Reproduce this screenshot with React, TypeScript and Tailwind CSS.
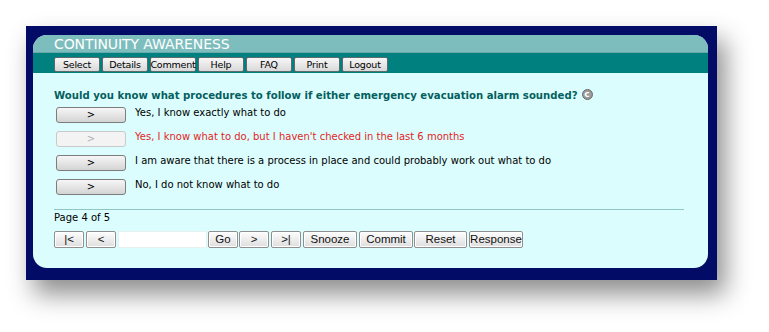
import React from "react";

const navItems = ["Select", "Details", "Comment", "Help", "FAQ", "Print", "Logout"];

const answers = [
  { text: "Yes, I know exactly what to do", active: true },
  { text: "Yes, I know what to do, but I haven't checked in the last 6 months", active: false },
  { text: "I am aware that there is a process in place and could probably work out what to do", active: true },
  { text: "No, I do not know what to do", active: true },
];

const lucida = "font-['DejaVu_Sans',Verdana,sans-serif]";

function NavButton({ label }: { label: string }) {
  return (
    <button className="w-[46px] h-[15px] flex items-center justify-center rounded-[2px] border border-[#5c6b6b] bg-gradient-to-b from-[#f7f7f7] to-[#d9d9d9] text-[9.5px] tracking-[-0.2px] text-black leading-none">
      {label}
    </button>
  );
}

function PagerButton({ label, w, ml }: { label: string; w: string; ml: string }) {
  return (
    <button
      className={`${w} ${ml} h-[17px] flex items-center justify-center rounded-[2px] border border-[#8f8f8f] bg-gradient-to-b from-[#fdfdfd] to-[#dedede] font-['Liberation_Sans',Arial,sans-serif] text-[11.5px] text-[#111] leading-none shadow-[inset_0_0_0_1px_#ffffff]`}
    >
      {label}
    </button>
  );
}

export default function App() {
  return (
    <div className="w-[769px] h-[332px] bg-white pl-[26px] pt-[26px]">
      <div className="w-[691px] h-[254px] bg-[#020b66] pl-[7px] pt-[9px] shadow-[8px_14px_24px_rgba(0,0,0,0.45)]">
        <div className={`w-[675px] h-[233px] rounded-[14px] overflow-hidden bg-[#dcfdfd] flex flex-col ${lucida}`}>
          <div className="h-[18px] bg-[#7dbdbd] border-b border-[#6aa9a9] pl-[21px] flex items-center">
            <span className="text-white text-[14px] leading-none tracking-[-0.1px]">CONTINUITY AWARENESS</span>
          </div>
          <div className="h-[20px] bg-[#018080] pl-[21px] pt-[4px] flex gap-[2px]">
            {navItems.map((n) => (
              <NavButton key={n} label={n} />
            ))}
          </div>

          <div className="pl-[21px] pr-[24px] pt-[16px] flex flex-col">
            <div className="flex items-center gap-[4px] h-[14px]">
              <span className="text-[#045f5f] font-bold text-[10.15px] leading-none">
                Would you know what procedures to follow if either emergency evacuation alarm sounded?
              </span>
              <span className="w-[11px] h-[11px] -mt-[3px] rounded-full bg-[#9a9a9a] border border-[#6d6d6d] flex items-center justify-center text-white text-[9px] font-bold leading-none">
                c
              </span>
            </div>

            <div className="flex flex-col gap-[8px] mt-[4px] ml-[2px]">
              {answers.map((a) => (
                <div key={a.text} className="flex items-center gap-[9px] h-[16px]">
                  <button
                    className={
                      a.active
                        ? "w-[70px] h-[16px] flex items-center justify-center rounded-[3px] border border-[#7d7d7d] bg-gradient-to-b from-[#f6f6f6] to-[#d4d4d4] text-[10px] text-black leading-none"
                        : "w-[70px] h-[16px] flex items-center justify-center rounded-[3px] border border-[#c9c9c9] bg-[#f3f3f3] text-[10px] text-[#b0b0b0] leading-none"
                    }
                  >
                    &gt;
                  </button>
                  <span className={`text-[10px] leading-none -mt-[4px] ${a.active ? "text-black" : "text-[#e21f26]"}`}>
                    {a.text}
                  </span>
                </div>
              ))}
            </div>

            <div className="mt-[14px] h-[1px] w-[630px] bg-[#8fc6c6]" />

            <div className="mt-[1px] text-[10px] leading-[14px] text-black">Page 4 of 5</div>

            <div className="mt-[6px] flex items-center">
              <PagerButton label="|<" w="w-[30px]" ml="ml-0" />
              <PagerButton label="<" w="w-[30px]" ml="ml-[2px]" />
              <input className="w-[89px] h-[17px] ml-[2px] bg-white border border-[#e6f2f2] outline-none" />
              <PagerButton label="Go" w="w-[30px]" ml="ml-[1px]" />
              <PagerButton label=">" w="w-[30px]" ml="ml-[1px]" />
              <PagerButton label=">|" w="w-[30px]" ml="ml-[2px]" />
              <PagerButton label="Snooze" w="w-[54px]" ml="ml-[2px]" />
              <PagerButton label="Commit" w="w-[54px]" ml="ml-[2px]" />
              <PagerButton label="Reset" w="w-[53px]" ml="ml-[1px]" />
              <PagerButton label="Response" w="w-[54px]" ml="ml-[2px]" />
            </div>
          </div>
        </div>
      </div>
    </div>
  );
}
